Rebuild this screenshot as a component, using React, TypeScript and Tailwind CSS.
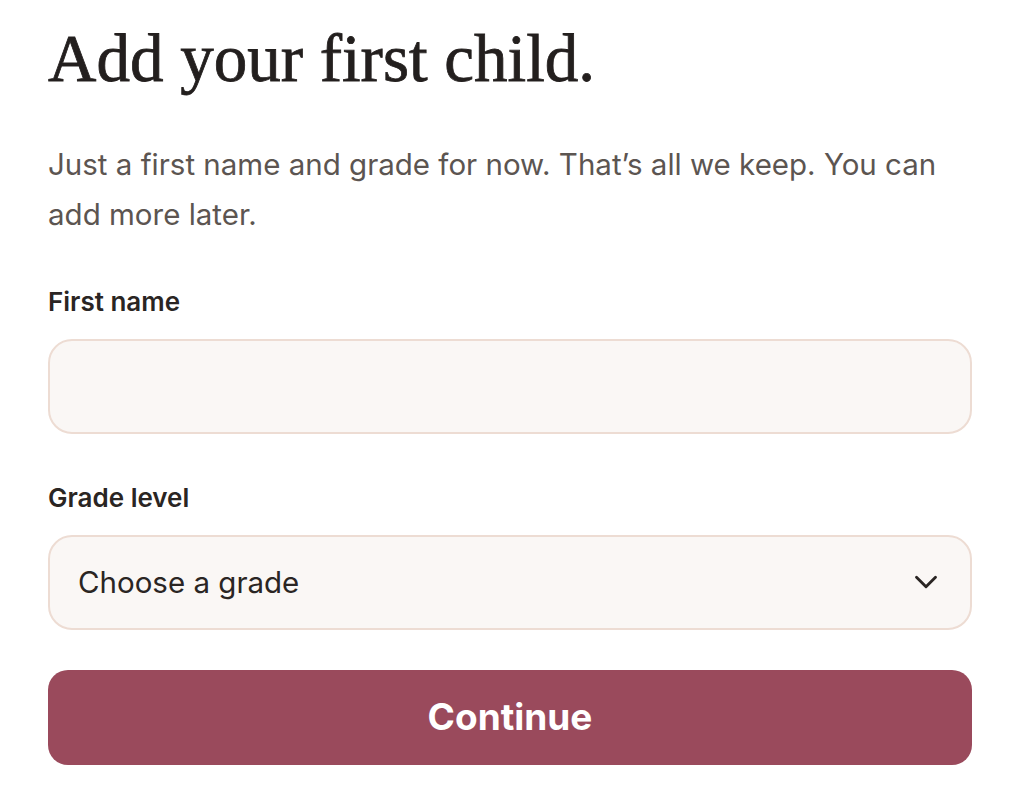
import React from "react";
import { ChevronDown } from "lucide-react";

export default function App() {
  return (
    <div className="min-h-screen bg-white px-12 pt-[22px] font-['Inter',sans-serif]">
      <h1 className="font-['Liberation_Serif',serif] text-[67px] leading-[1.1] font-normal text-[#231f1e] [-webkit-text-stroke:0.8px_#231f1e]">
        Add your first child.
      </h1>

      <p className="mt-[43px] text-[29.5px] leading-[50px] text-[#5c5551]">
        Just a first name and grade for now. That’s all we keep. You can add more later.
      </p>

      <form className="mt-[46px] flex flex-col" onSubmit={(e) => e.preventDefault()}>
        <label className="text-[26px] leading-[34px] font-semibold text-[#2a2523]">First name</label>
        <input
          type="text"
          className="mt-[20px] h-[95px] w-full rounded-[24px] border-2 border-[#eddcd3] bg-[#faf7f5] px-[30px] text-[29px] outline-none"
        />

        <label className="mt-[47px] text-[26px] leading-[34px] font-semibold text-[#2a2523]">Grade level</label>
        <div className="mt-[20px] flex h-[95px] w-full items-center justify-between rounded-[24px] border-2 border-[#eddcd3] bg-[#faf7f5] pl-[28px] pr-[25px]">
          <span className="text-[29.5px] text-[#2a2523]">Choose a grade</span>
          <ChevronDown size={38} strokeWidth={1.8} className="text-[#2a2523]" />
        </div>

        <button
          type="submit"
          className="mt-[40px] h-[95px] w-full rounded-[20px] bg-[#9a4a5c] text-[37px] font-bold text-white"
        >
          Continue
        </button>
      </form>
    </div>
  );
}
